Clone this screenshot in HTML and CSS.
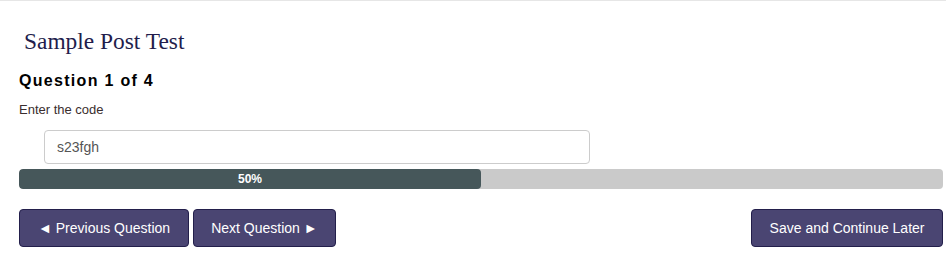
FILE: index.html
```html
<!DOCTYPE html>
<html>
<head>
<meta charset="utf-8">
<link rel="stylesheet" href="styles.css">
</head>
<body>
<div class="page">
  <h1 class="title">Sample Post Test</h1>
  <h2 class="question">Question 1 of 4</h2>
  <label class="prompt" for="code">Enter the code</label>
  <div class="answer">
    <input id="code" class="code-input" type="text" value="s23fgh">
  </div>
  <div class="progress">
    <div class="progress-fill" style="width:50%">50%</div>
  </div>
  <div class="actions">
    <div class="nav">
      <button class="btn">&#9668; Previous Question</button>
      <button class="btn btn-next">Next Question &#9658;</button>
    </div>
    <button class="btn btn-save">Save and Continue Later</button>
  </div>
</div>
</body>
</html>
```
FILE: styles.css
```css
html, body {
  margin: 0;
  padding: 0;
  background: #ffffff;
}
body {
  border-top: 1px solid #e6e6e6;
  font-family: "Liberation Sans", Arial, sans-serif;
}
.page {
  padding: 0 3px 0 19px;
}
.title {
  margin: 0;
  padding: 26px 0 0 5px;
  font-family: "Liberation Serif", "Times New Roman", serif;
  font-weight: normal;
  font-size: 23.4px;
  line-height: 28px;
  color: #221d4c;
}
.question {
  margin: 16px 0 0;
  font-size: 16px;
  line-height: 20px;
  font-weight: bold;
  letter-spacing: 1.3px;
  color: #000;
}
.prompt {
  display: block;
  margin-top: 11px;
  font-size: 13px;
  line-height: 16px;
  color: #3a2e2e;
}
.answer {
  margin-top: 12px;
  padding-left: 25px;
}
.code-input {
  box-sizing: border-box;
  display: block;
  width: 546px;
  height: 34px;
  margin: 0;
  padding: 6px 12px;
  border: 1px solid #cccccc;
  border-radius: 4px;
  font-family: "Liberation Sans", Arial, sans-serif;
  font-size: 14px;
  color: #555555;
  outline: none;
}
.progress {
  margin-top: 5px;
  height: 20px;
  background: #cacaca;
  border-radius: 4px;
  overflow: hidden;
}
.progress-fill {
  height: 100%;
  background: #46575a;
  color: #ffffff;
  font-size: 12px;
  font-weight: bold;
  line-height: 20px;
  text-align: center;
  border-radius: 4px;
}
.actions {
  margin-top: 20px;
  display: flex;
  justify-content: space-between;
  align-items: flex-start;
}
.nav {
  display: flex;
  gap: 4px;
}
.btn {
  box-sizing: border-box;
  height: 38px;
  margin: 0;
  padding: 0 18px;
  background: #4a4572;
  border: 1px solid #231f4b;
  border-radius: 4px;
  color: #ffffff;
  font-family: "Liberation Sans", Arial, sans-serif;
  font-size: 14px;
  line-height: 20px;
  cursor: pointer;
}
.btn-next {
  padding: 0 17px;
}
.btn-save {
  padding: 0 17.5px;
}
```
